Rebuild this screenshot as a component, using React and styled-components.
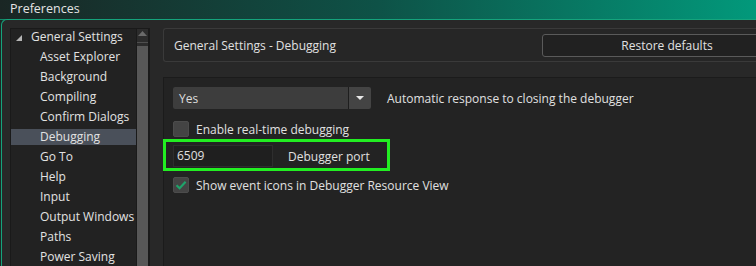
import styled, { createGlobalStyle } from 'styled-components';

const GlobalStyle = createGlobalStyle`
  html, body {
    margin: 0;
    padding: 0;
    background: #1c2725;
  }
  body {
    font-family: "Open Sans", "Noto Sans", sans-serif;
    font-size: 12px;
    color: #dedede;
  }
`;

const treeItems = [
  'Asset Explorer',
  'Background',
  'Compiling',
  'Confirm Dialogs',
  'Debugging',
  'Go To',
  'Help',
  'Input',
  'Output Windows',
  'Paths',
  'Power Saving',
];

function App() {
  return (
    <Window>
      <GlobalStyle />
      <TitleBar>Preferences</TitleBar>
      <Frame>
        <Tree>
          <TreeList>
            <TreeRow $level={0}>
              <Expander width="6" height="6" viewBox="0 0 6 6">
                <polygon points="6,0 6,6 0,6" fill="#b5b5b5" />
              </Expander>
              General Settings
            </TreeRow>
            {treeItems.map((item) => (
              <TreeRow key={item} $level={1} $selected={item === 'Debugging'}>
                {item}
              </TreeRow>
            ))}
          </TreeList>
          <ScrollBar>
            <ScrollUp>
              <svg width="9" height="5" viewBox="0 0 9 5">
                <polygon points="4.5,0 9,5 0,5" fill="#6a6a6a" />
              </svg>
            </ScrollUp>
            <ScrollThumb />
          </ScrollBar>
        </Tree>
        <Main>
          <Header>
            <HeaderTitle>General Settings - Debugging</HeaderTitle>
            <RestoreButton>Restore defaults</RestoreButton>
          </Header>
          <Content>
            <Row>
              <Select>
                <SelectValue>Yes</SelectValue>
                <SelectArrow>
                  <svg width="8" height="4" viewBox="0 0 8 4">
                    <polygon points="0,0 8,0 4,4" fill="#e8e8e8" />
                  </svg>
                </SelectArrow>
              </Select>
              <Label $gap={16}>Automatic response to closing the debugger</Label>
            </Row>
            <CheckRow $top={12}>
              <Checkbox />
              <Label $gap={7}>Enable real-time debugging</Label>
            </CheckRow>
            <Highlight>
              <PortInput>6509</PortInput>
              <Label $gap={15}>Debugger port</Label>
            </Highlight>
            <CheckRow $top={6}>
              <Checkbox>
                <svg width="12" height="10" viewBox="0 0 12 10">
                  <path d="M1.5 5.2 L4.6 8.2 L10.6 1.8" stroke="#1fa36a" strokeWidth="2.2" fill="none" />
                </svg>
              </Checkbox>
              <Label $gap={7}>Show event icons in Debugger Resource View</Label>
            </CheckRow>
          </Content>
        </Main>
      </Frame>
    </Window>
  );
}

const Window = styled.div`
  width: 756px;
  height: 266px;
  overflow: hidden;
  display: flex;
  flex-direction: column;
  background: #1c2725;
`;

const TitleBar = styled.div`
  height: 19px;
  flex: 0 0 auto;
  padding-left: 10px;
  line-height: 18px;
  font-size: 12.5px;
  color: #e4e4e4;
  background: linear-gradient(90deg, #1a2624 0%, #0e5247 50%, #02997b 100%);
  border-bottom: 1px solid #128a68;
`;

const Frame = styled.div`
  flex: 1;
  display: flex;
  min-height: 0;
  margin-left: 1px;
  margin-top: -1px;
  padding: 8px 0 0 8px;
  background: #282828;
  border-left: 1px solid #15a37c;
  border-top: 1px solid #15a37c;
  border-top-left-radius: 6px;
`;

const Tree = styled.div`
  width: 138px;
  flex: 0 0 auto;
  display: flex;
  background: #222222;
  border: 1px solid #1a1a1a;
  border-bottom: none;
`;

const TreeList = styled.div`
  flex: 1;
  display: flex;
  flex-direction: column;
  gap: 4px;
`;

const TreeRow = styled.div`
  height: 16px;
  line-height: 16px;
  display: flex;
  align-items: center;
  padding-left: ${(p) => (p.$level === 0 ? 5 : 29)}px;
  white-space: nowrap;
  color: #e2e2e2;
  background: ${(p) => (p.$selected ? '#4a505a' : 'transparent')};
`;

const Expander = styled.svg`
  margin-right: 9px;
  margin-top: 1px;
`;

const ScrollBar = styled.div`
  width: 11px;
  flex: 0 0 auto;
  display: flex;
  flex-direction: column;
  background: #2c2c2c;
  border-left: 1px solid #1a1a1a;
  border-right: 1px solid #1a1a1a;
`;

const ScrollUp = styled.div`
  height: 11px;
  display: flex;
  justify-content: center;
  padding-top: 2px;
  border-bottom: 1px solid #4f4f4f;
`;

const ScrollThumb = styled.div`
  flex: 1;
  margin-top: 3px;
  background: #575757;
`;

const Main = styled.div`
  flex: 1;
  min-width: 0;
  margin-left: 13px;
  display: flex;
  flex-direction: column;
`;

const Header = styled.div`
  height: 32px;
  flex: 0 0 auto;
  display: flex;
  align-items: center;
  padding-left: 10px;
  background: #262626;
  border: 1px solid #3a3a3a;
  border-right: none;
  border-top-left-radius: 3px;
  border-bottom-left-radius: 3px;
  overflow: hidden;
`;

const HeaderTitle = styled.div`
  flex: 1;
  color: #e0e0e0;
`;

const RestoreButton = styled.div`
  width: 248px;
  height: 21px;
  flex: 0 0 auto;
  margin-right: -36px;
  display: flex;
  align-items: center;
  justify-content: center;
  background: #212121;
  border: 1px solid #5a5a5a;
  border-radius: 3px;
  color: #e0e0e0;
`;

const Content = styled.div`
  flex: 1;
  margin-top: 15px;
  padding: 9px 0 0 9px;
  background: #232323;
  border-left: 1px solid #1b1b1b;
  border-top: 1px solid #1b1b1b;
`;

const Row = styled.div`
  display: flex;
  align-items: center;
`;

const CheckRow = styled(Row)`
  height: 16px;
  margin-top: ${(p) => p.$top}px;
`;

const Label = styled.span`
  margin-left: ${(p) => p.$gap}px;
  white-space: nowrap;
  color: #e0e0e0;
`;

const Select = styled.div`
  width: 198px;
  height: 22px;
  display: flex;
  gap: 1px;
  background: #1e1e1e;
  border-radius: 2px;
`;

const SelectValue = styled.div`
  flex: 1;
  display: flex;
  align-items: center;
  padding-left: 6px;
  background: #3d3d3d;
  border-radius: 2px 0 0 2px;
`;

const SelectArrow = styled.div`
  width: 22px;
  display: flex;
  align-items: center;
  justify-content: center;
  background: #444444;
  border-radius: 0 2px 2px 0;
`;

const Checkbox = styled.div`
  width: 14px;
  height: 14px;
  display: flex;
  align-items: center;
  justify-content: center;
  background: #444444;
  border: 1px solid #4c4c4c;
  border-radius: 2px;
`;

const Highlight = styled.div`
  width: 214px;
  height: 22px;
  margin: 2px 0 0 -10px;
  padding: 3px 0 1px 7px;
  display: flex;
  align-items: center;
  border: 3px solid #22ee22;
`;

const PortInput = styled.div`
  width: 95px;
  height: 20px;
  padding-left: 3px;
  line-height: 20px;
  background: #1f1f1f;
  border: 1px solid #2e2e2e;
  color: #e0e0e0;
`;

export default App;
